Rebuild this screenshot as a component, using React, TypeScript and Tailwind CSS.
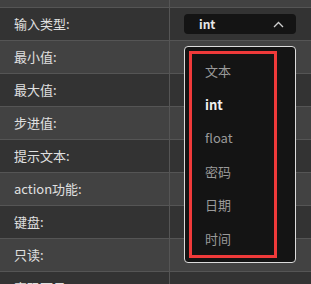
import React from "react";

const rows: { label: string; dark: boolean }[] = [
  { label: "输入类型:", dark: true },
  { label: "最小值:", dark: false },
  { label: "最大值:", dark: true },
  { label: "步进值:", dark: false },
  { label: "提示文本:", dark: true },
  { label: "action功能:", dark: false },
  { label: "键盘:", dark: true },
  { label: "只读:", dark: false },
  { label: "密码可见:", dark: true },
];

const options = ["文本", "int", "float", "密码", "日期", "时间"];

export default function App() {
  return (
    <div
      className="relative w-[311px] h-[284px] overflow-hidden bg-[#333333]"
      style={{ fontFamily: '"Noto Sans CJK SC", "Noto Sans", sans-serif' }}
    >
      <div className="flex flex-col">
        <div className="flex h-[8px] bg-[#424242] border-b border-[#555555]">
          <div className="w-[170px] border-r border-[#555555]" />
          <div className="flex-1" />
        </div>
        {rows.map((r, i) => (
          <div
            key={i}
            className={`flex h-[33px] border-b border-[#555555] ${r.dark ? "bg-[#333333]" : "bg-[#424242]"}`}
          >
            <div className="w-[170px] shrink-0 border-r border-[#555555] flex items-center pl-[14px] text-[13px] text-[#e0e0e0]">
              {r.label}
            </div>
            <div className="flex-1 flex items-center pl-[14px]">
              {i === 0 && (
                <div className="w-[112px] h-[20px] rounded-[4px] bg-[#141414] flex items-center justify-between pl-[15px] pr-[12px]">
                  <span className="text-[12px] font-bold text-[#e8e8e8] leading-none">int</span>
                  <svg width="11" height="7" viewBox="0 0 11 7" fill="none">
                    <path d="M1 6L5.5 1.5L10 6" stroke="#cfcfcf" strokeWidth="1.3" />
                  </svg>
                </div>
              )}
              {i === 8 && (
                <div className="mt-[16px] w-[13px] h-[13px] rounded-[2px] border border-[#e0e0e0] bg-[#141414]" />
              )}
            </div>
          </div>
        ))}
      </div>

      <div className="absolute left-[184px] top-[46px] w-[112px] h-[217px] rounded-[4px] border border-[#dcdcdc] bg-[#141414] p-[4px]">
        <div className="w-[88px] h-[207px] border-[3px] border-[#f03a3a] flex flex-col pt-[0px]">
          {options.map((o) => (
            <div
              key={o}
              className={`h-[33.8px] flex items-center pl-[13px] text-[13px] ${o === "int" ? "font-bold text-[#f0f0f0]" : "text-[#9a9a9a]"}`}
            >
              {o}
            </div>
          ))}
        </div>
      </div>
    </div>
  );
}
